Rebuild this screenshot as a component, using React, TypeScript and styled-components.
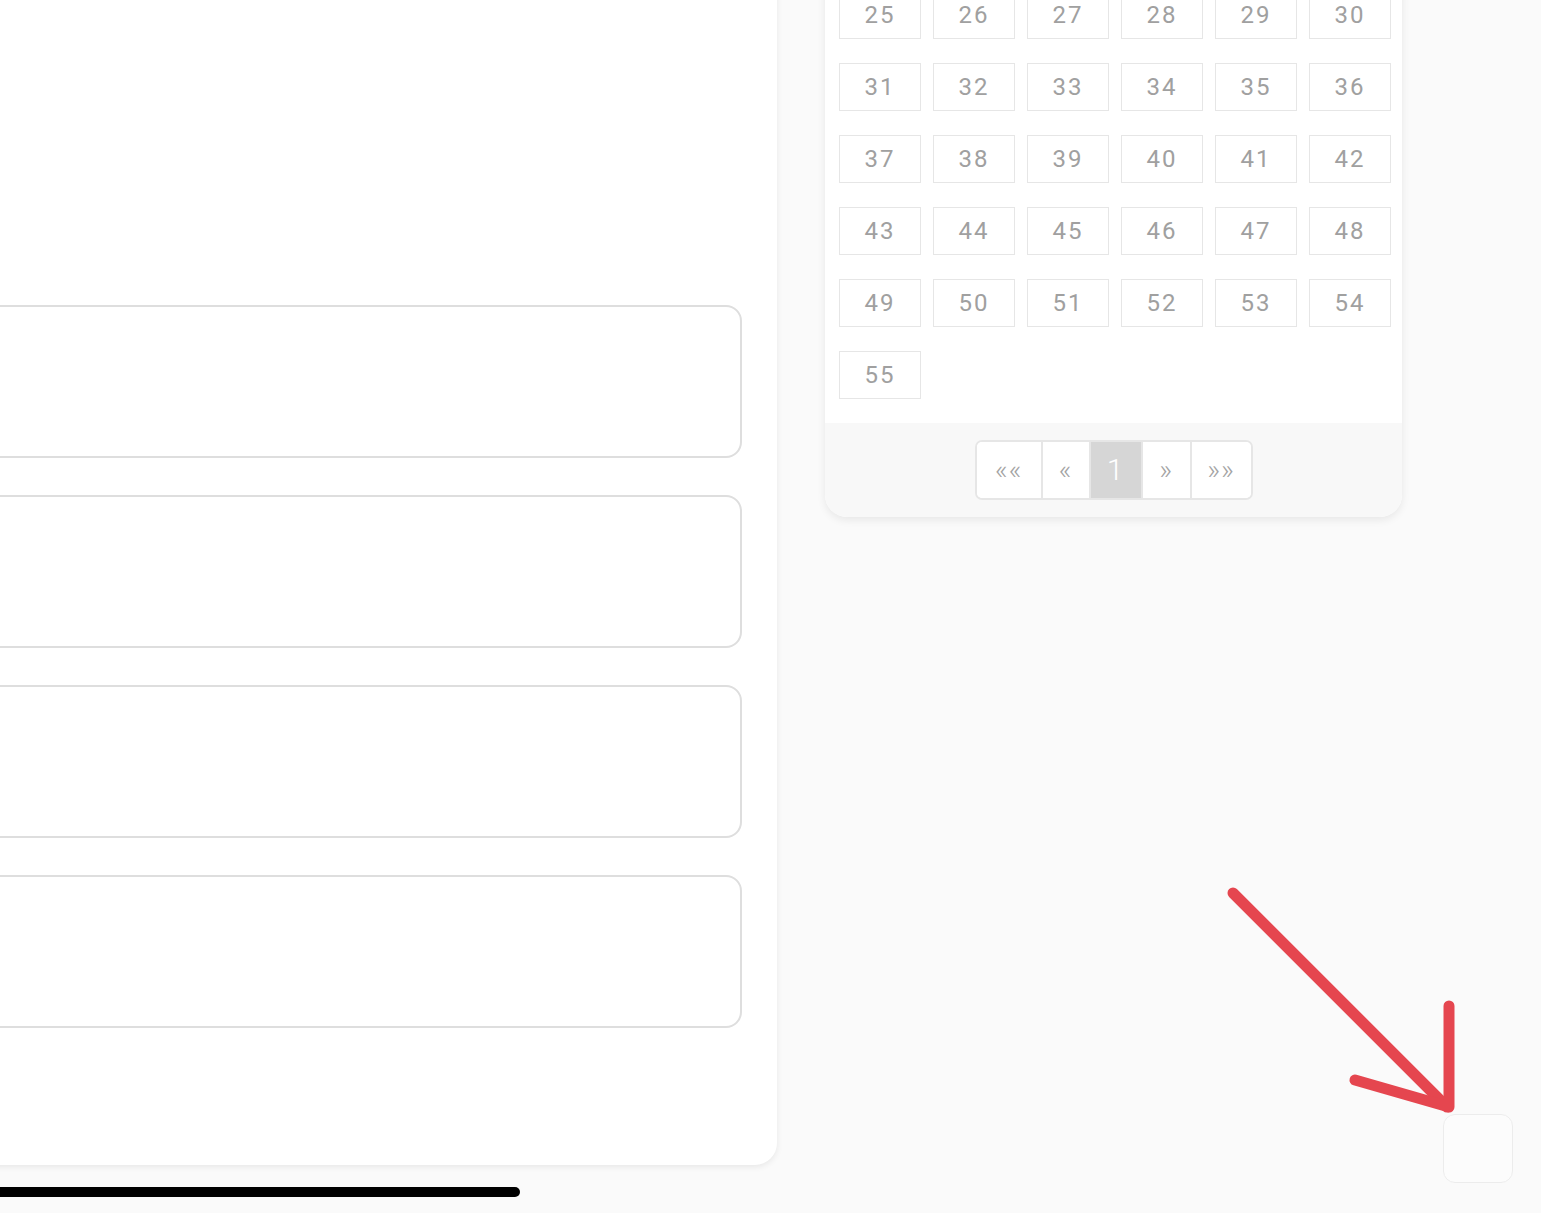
import styled, { createGlobalStyle } from 'styled-components'

const GlobalStyle = createGlobalStyle`
  html, body {
    margin: 0;
    padding: 0;
    background: #fafafa;
    font-family: Roboto, "Noto Sans", sans-serif;
    overflow: hidden;
    height: 1213px;
  }
`

const Page = styled.div`
  margin-top: -321px;
  margin-left: -40px;
  display: flex;
  flex-direction: column;
`

const Row = styled.div`
  display: flex;
  align-items: flex-start;
  gap: 48px;
`

const EditorCard = styled.div`
  width: 817px;
  box-sizing: border-box;
  background: #fff;
  border-radius: 0 0 22px 0;
  box-shadow: 0 2px 6px rgba(0, 0, 0, 0.08);
  padding: 626px 35px 137px 0;
  display: flex;
  flex-direction: column;
  gap: 37px;
`

const Field = styled.div`
  height: 153px;
  box-sizing: border-box;
  border: 2px solid #dedede;
  border-radius: 16px;
  background: #fff;
`

const PickerCard = styled.div`
  width: 577px;
  background: #fff;
  border-radius: 0 0 22px 22px;
  box-shadow: 0 3px 8px rgba(0, 0, 0, 0.08);
  overflow: hidden;
`

const NumberGrid = styled.div`
  display: grid;
  grid-template-columns: repeat(6, 82px);
  grid-auto-rows: 48px;
  column-gap: 12px;
  row-gap: 24px;
  padding: 24px 11px 24px 14px;
`

const Cell = styled.div`
  box-sizing: border-box;
  border: 1px solid #e6e6e6;
  background: #fff;
  display: flex;
  align-items: center;
  justify-content: center;
  color: #a0a0a0;
  font-size: 24px;
  letter-spacing: 2px;
`

const Footer = styled.div`
  background: #f8f8f8;
  padding: 17px 0;
  display: flex;
  justify-content: center;
`

const Pager = styled.div`
  display: flex;
  height: 60px;
  box-sizing: border-box;
  border: 2px solid #e6e6e6;
  border-radius: 7px;
  background: #fff;
  overflow: hidden;
`

const PageButton = styled.div<{ $w: number; $active?: boolean }>`
  width: ${(p) => p.$w}px;
  box-sizing: border-box;
  display: flex;
  align-items: center;
  justify-content: center;
  padding-bottom: 2px;
  color: ${(p) => (p.$active ? '#fff' : '#a3a3a3')};
  background: ${(p) => (p.$active ? '#d6d6d6' : '#fff')};
  font-size: ${(p) => (p.$active ? '30px' : '28px')};
  font-weight: 300;
  letter-spacing: 1px;
  & + & {
    border-left: 2px solid #e6e6e6;
  }
`

const ScrollThumb = styled.div`
  margin-top: 22px;
  width: 560px;
  height: 10px;
  background: #000;
  border-radius: 5px;
`

const Arrow = styled.svg`
  position: fixed;
  left: 1220px;
  top: 880px;
  pointer-events: none;
`

const CornerBox = styled.div`
  position: fixed;
  right: 28px;
  bottom: 30px;
  width: 70px;
  height: 69px;
  box-sizing: border-box;
  border: 1px solid #ececec;
  border-radius: 12px;
  background: #fcfcfc;
`

const numbers = Array.from({ length: 55 }, (_, i) => i + 1)

function App() {
  return (
    <>
      <GlobalStyle />
      <Page>
        <Row>
          <EditorCard>
            <Field />
            <Field />
            <Field />
            <Field />
          </EditorCard>
          <PickerCard>
            <NumberGrid>
              {numbers.map((n) => (
                <Cell key={n}>{n}</Cell>
              ))}
            </NumberGrid>
            <Footer>
              <Pager>
                <PageButton $w={64}>««</PageButton>
                <PageButton $w={48}>«</PageButton>
                <PageButton $w={52} $active>1</PageButton>
                <PageButton $w={49}>»</PageButton>
                <PageButton $w={61}>»»</PageButton>
              </Pager>
            </Footer>
          </PickerCard>
        </Row>
        <ScrollThumb />
      </Page>
      <Arrow width="240" height="240" viewBox="0 0 240 240">
        <g stroke="#e5464f" strokeWidth="11" strokeLinecap="round" strokeLinejoin="round" fill="none">
          <line x1="13" y1="13" x2="227" y2="227" />
          <polyline points="229,126 229,227 135,200" />
        </g>
      </Arrow>
      <CornerBox />
    </>
  )
}

export default App
